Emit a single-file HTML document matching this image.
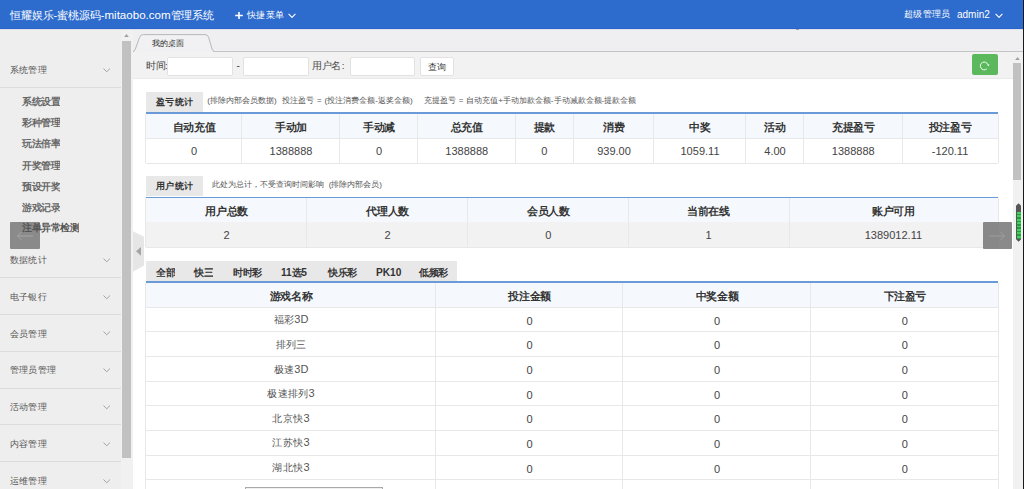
<!DOCTYPE html>
<html><head><meta charset="utf-8">
<style>
*{margin:0;padding:0;box-sizing:border-box}
html,body{width:1024px;height:489px;overflow:hidden;background:#fff;font-family:"Liberation Sans",sans-serif;position:relative}
.a{position:absolute;white-space:nowrap}
.n{font-size:1.07em}
</style></head><body>
<div class="a" style="left:0px;top:0px;width:1024px;height:29px;background:#2d6ccd;"></div>
<div class="a" style="left:0px;top:28px;width:1024px;height:1px;background:#2864c9;"></div>
<div class="a" style="left:10px;top:6.5px;font-size:11px;line-height:16.15px;color:#fff;transform:scale(0.9909);transform-origin:0 0;">恒耀娱乐-蜜桃源码-<span class="n" style="font-size:1.06em">mitaobo.com</span>管理系统</div>
<svg class="a" style="left:235px;top:12px" width="8" height="7" viewBox="0 0 8 7"><path d="M4 0 V7 M0.2 3.5 H7.8" stroke="#fff" stroke-width="1.6"/></svg>
<div class="a" style="left:246.5px;top:7.5px;font-size:10px;line-height:15.05px;color:#fff;transform:scale(0.9300);transform-origin:0 0;">快捷菜单</div>
<svg class="a" style="left:287.8px;top:12.8px" width="8" height="5.5" viewBox="0 0 8 5.5"><path d="M0.6 0.8 L4 4.4 L7.4 0.8" fill="none" stroke="#fff" stroke-width="1.1"/></svg>
<div class="a" style="left:903.5px;top:7.3px;font-size:10px;line-height:15.05px;color:#fff;transform:scale(0.9300);transform-origin:0 0;">超级管理员</div>
<div class="a" style="left:957px;top:7.5px;font-size:10px;line-height:14px;color:#fff;">admin2</div>
<svg class="a" style="left:994.8px;top:12.8px" width="8" height="5.5" viewBox="0 0 8 5.5"><path d="M0.6 0.8 L4 4.4 L7.4 0.8" fill="none" stroke="#fff" stroke-width="1.1"/></svg>
<div class="a" style="left:0px;top:29px;width:121px;height:460px;background:#eeeeee;"></div>
<div class="a" style="left:0px;top:87px;width:121px;height:1px;background:#dcdcdc;"></div>
<div class="a" style="left:10px;top:63.7px;font-size:10px;line-height:14.13px;color:#555;transform:scale(0.9200);transform-origin:0 0;">系统管理</div>
<svg class="a" style="left:103px;top:67.5px" width="8" height="5" viewBox="0 0 8 5"><path d="M0.5 0.5 L3.7 3.8 L7 0.5" fill="none" stroke="#9a9a9a" stroke-width="0.9"/></svg>
<div class="a" style="left:22px;top:94.60000000000001px;font-size:10px;line-height:13.68px;color:#666;font-weight:bold;transform:scale(0.9500);transform-origin:0 0;">系统设置</div>
<div class="a" style="left:22px;top:115.9px;font-size:10px;line-height:13.68px;color:#666;font-weight:bold;transform:scale(0.9500);transform-origin:0 0;">彩种管理</div>
<div class="a" style="left:22px;top:137.2px;font-size:10px;line-height:13.68px;color:#666;font-weight:bold;transform:scale(0.9500);transform-origin:0 0;">玩法倍率</div>
<div class="a" style="left:22px;top:158.5px;font-size:10px;line-height:13.68px;color:#666;font-weight:bold;transform:scale(0.9500);transform-origin:0 0;">开奖管理</div>
<div class="a" style="left:22px;top:179.79999999999998px;font-size:10px;line-height:13.68px;color:#666;font-weight:bold;transform:scale(0.9500);transform-origin:0 0;">预设开奖</div>
<div class="a" style="left:22px;top:201.1px;font-size:10px;line-height:13.68px;color:#666;font-weight:bold;transform:scale(0.9500);transform-origin:0 0;">游戏记录</div>
<div class="a" style="left:10px;top:222px;width:30px;height:27.3px;background:#8a8a8a;border-radius:1px"></div>
<svg class="a" style="left:16px;top:230.5px" width="18" height="10" viewBox="0 0 18 10"><path d="M17 5 H1.5 M5.5 1 L1.5 5 L5.5 9" fill="none" stroke="#a6a6a6" stroke-width="1"/></svg>
<div class="a" style="left:22px;top:221.39999999999998px;font-size:10px;line-height:13.68px;color:#555;font-weight:bold;transform:scale(0.9500);transform-origin:0 0;">注单异常检测</div>
<div class="a" style="left:0px;top:277.2px;width:121px;height:1px;background:#dcdcdc;"></div>
<div class="a" style="left:10px;top:253.89999999999998px;font-size:10px;line-height:14.13px;color:#555;transform:scale(0.9200);transform-origin:0 0;">数据统计</div>
<svg class="a" style="left:103px;top:257.7px" width="8" height="5" viewBox="0 0 8 5"><path d="M0.5 0.5 L3.7 3.8 L7 0.5" fill="none" stroke="#9a9a9a" stroke-width="0.9"/></svg>
<div class="a" style="left:0px;top:314px;width:121px;height:1px;background:#dcdcdc;"></div>
<div class="a" style="left:10px;top:290.7px;font-size:10px;line-height:14.13px;color:#555;transform:scale(0.9200);transform-origin:0 0;">电子银行</div>
<svg class="a" style="left:103px;top:294.5px" width="8" height="5" viewBox="0 0 8 5"><path d="M0.5 0.5 L3.7 3.8 L7 0.5" fill="none" stroke="#9a9a9a" stroke-width="0.9"/></svg>
<div class="a" style="left:0px;top:350.8px;width:121px;height:1px;background:#dcdcdc;"></div>
<div class="a" style="left:10px;top:327.5px;font-size:10px;line-height:14.13px;color:#555;transform:scale(0.9200);transform-origin:0 0;">会员管理</div>
<svg class="a" style="left:103px;top:331.3px" width="8" height="5" viewBox="0 0 8 5"><path d="M0.5 0.5 L3.7 3.8 L7 0.5" fill="none" stroke="#9a9a9a" stroke-width="0.9"/></svg>
<div class="a" style="left:0px;top:387.6px;width:121px;height:1px;background:#dcdcdc;"></div>
<div class="a" style="left:10px;top:364.3px;font-size:10px;line-height:14.13px;color:#555;transform:scale(0.9200);transform-origin:0 0;">管理员管理</div>
<svg class="a" style="left:103px;top:368.1px" width="8" height="5" viewBox="0 0 8 5"><path d="M0.5 0.5 L3.7 3.8 L7 0.5" fill="none" stroke="#9a9a9a" stroke-width="0.9"/></svg>
<div class="a" style="left:0px;top:424.4px;width:121px;height:1px;background:#dcdcdc;"></div>
<div class="a" style="left:10px;top:401.09999999999997px;font-size:10px;line-height:14.13px;color:#555;transform:scale(0.9200);transform-origin:0 0;">活动管理</div>
<svg class="a" style="left:103px;top:404.9px" width="8" height="5" viewBox="0 0 8 5"><path d="M0.5 0.5 L3.7 3.8 L7 0.5" fill="none" stroke="#9a9a9a" stroke-width="0.9"/></svg>
<div class="a" style="left:0px;top:461.2px;width:121px;height:1px;background:#dcdcdc;"></div>
<div class="a" style="left:10px;top:437.9px;font-size:10px;line-height:14.13px;color:#555;transform:scale(0.9200);transform-origin:0 0;">内容管理</div>
<svg class="a" style="left:103px;top:441.7px" width="8" height="5" viewBox="0 0 8 5"><path d="M0.5 0.5 L3.7 3.8 L7 0.5" fill="none" stroke="#9a9a9a" stroke-width="0.9"/></svg>
<div class="a" style="left:10px;top:474.7px;font-size:10px;line-height:14.13px;color:#555;transform:scale(0.9200);transform-origin:0 0;">运维管理</div>
<svg class="a" style="left:103px;top:478.5px" width="8" height="5" viewBox="0 0 8 5"><path d="M0.5 0.5 L3.7 3.8 L7 0.5" fill="none" stroke="#9a9a9a" stroke-width="0.9"/></svg>
<div class="a" style="left:121px;top:29px;width:12px;height:460px;background:#f1f1f1;"></div>
<svg class="a" style="left:124px;top:33.8px" width="5" height="3.2" viewBox="0 0 5 3.2"><path d="M0 3.2 L2.5 0 L5 3.2Z" fill="#a0a0a0"/></svg>
<div class="a" style="left:122px;top:40.7px;width:9px;height:417.3px;background:#c1c1c1;"></div>
<div class="a" style="left:133px;top:29px;width:890px;height:23px;background:#efeef0;"></div>
<div class="a" style="left:133px;top:51px;width:1px;height:1px;background:#c4c4c4;"></div>
<div class="a" style="left:213px;top:51px;width:810px;height:1px;background:#c4c4c4;"></div>
<svg class="a" style="left:133px;top:34px" width="82" height="18" viewBox="0 0 82 18"><path d="M0 17.5 Q1.6 17.2 2.4 15 L6.6 3.2 Q7.6 0.6 10.2 0.6 L72 0.6 Q74.6 0.6 75.6 3.2 L79 15 Q79.8 17.3 81.5 17.5" fill="#f1f1f3" stroke="#b8b8b8" stroke-width="1"/></svg>
<div class="a" style="left:152px;top:37.5px;font-size:8px;line-height:11px;color:#222;">我的桌面</div>
<div class="a" style="left:133px;top:52px;width:880px;height:26px;background:#f2f2f2;"></div>
<div class="a" style="left:133px;top:77.5px;width:880px;height:1px;background:#e9e9e9;"></div>
<div class="a" style="left:145.5px;top:58.5px;font-size:10px;line-height:13.68px;color:#444;transform:scale(0.9500);transform-origin:0 0;">时间<span style="font-size:1.05em">:</span></div>
<div class="a" style="left:166.5px;top:56.6px;width:66.0px;height:19.7px;background:#fff;border:1px solid #e2e2e2;border-radius:2px"></div>
<div class="a" style="left:236.5px;top:58.5px;font-size:10px;line-height:13px;color:#444;">-</div>
<div class="a" style="left:242.5px;top:56.6px;width:66.30000000000001px;height:19.7px;background:#fff;border:1px solid #e2e2e2;border-radius:2px"></div>
<div class="a" style="left:312px;top:58.5px;font-size:10px;line-height:13.68px;color:#444;transform:scale(0.9500);transform-origin:0 0;">用户名<span style="font-size:1.05em;margin-left:1.2px">:</span></div>
<div class="a" style="left:349.7px;top:56.6px;width:65.60000000000002px;height:19.7px;background:#fff;border:1px solid #e2e2e2;border-radius:2px"></div>
<div class="a" style="left:420px;top:56.6px;width:34.19999999999999px;height:19.7px;background:#fff;border:1px solid #e2e2e2;border-radius:2px"></div>
<div class="a" style="left:427.5px;top:60.5px;font-size:10px;line-height:13.98px;color:#333;transform:scale(0.9300);transform-origin:0 0;">查询</div>
<div class="a" style="left:972px;top:54.3px;width:26px;height:20.5px;background:#5cb85c;border-radius:2px"></div>
<svg class="a" style="left:978px;top:60px" width="12" height="12" viewBox="0 0 12 12"><path d="M9.9 4.6 A3.9 3.9 0 1 0 8.8 8.9" fill="none" stroke="#fff" stroke-width="0.9"/><path d="M9.0 4.6 L11.6 4.6 L10.3 6.3Z" fill="#fff"/></svg>
<div class="a" style="left:145.9px;top:92.4px;width:57px;height:19.8px;background:#e8e8e8;"></div>
<div class="a" style="left:155.7px;top:96.3px;font-size:10px;line-height:13.83px;color:#333;font-weight:bold;transform:scale(0.9400);transform-origin:0 0;">盈亏统计</div>
<div class="a" style="left:207.3px;top:94.5px;font-size:8px;line-height:12px;color:#555;word-spacing:0.6px">(排除内部会员数据)&nbsp; 投注盈亏 = (投注消费金额-返奖金额)&nbsp;&nbsp;&nbsp; 充提盈亏 = 自动充值+手动加款金额-手动减款金额-提款金额</div>
<div class="a" style="left:145.5px;top:112.2px;width:852.5px;height:1.6px;background:#6a9ad8;"></div>
<div class="a" style="left:145.5px;top:113.8px;width:852.5px;height:24.2px;background:#f5f9fd;"></div>
<div class="a" style="left:145.5px;width:96.0px;text-align:center;top:119.99999999999999px;font-size:11px;line-height:14.53px;color:#333;font-weight:bold;transform:scale(0.9636);transform-origin:50% 0;">自动充值</div>
<div class="a" style="left:241.5px;width:98.0px;text-align:center;top:119.99999999999999px;font-size:11px;line-height:14.53px;color:#333;font-weight:bold;transform:scale(0.9636);transform-origin:50% 0;">手动加</div>
<div class="a" style="left:339.5px;width:78.0px;text-align:center;top:119.99999999999999px;font-size:11px;line-height:14.53px;color:#333;font-weight:bold;transform:scale(0.9636);transform-origin:50% 0;">手动减</div>
<div class="a" style="left:417.5px;width:97.5px;text-align:center;top:119.99999999999999px;font-size:11px;line-height:14.53px;color:#333;font-weight:bold;transform:scale(0.9636);transform-origin:50% 0;">总充值</div>
<div class="a" style="left:515px;width:58.5px;text-align:center;top:119.99999999999999px;font-size:11px;line-height:14.53px;color:#333;font-weight:bold;transform:scale(0.9636);transform-origin:50% 0;">提款</div>
<div class="a" style="left:573.5px;width:80.0px;text-align:center;top:119.99999999999999px;font-size:11px;line-height:14.53px;color:#333;font-weight:bold;transform:scale(0.9636);transform-origin:50% 0;">消费</div>
<div class="a" style="left:653.5px;width:92.0px;text-align:center;top:119.99999999999999px;font-size:11px;line-height:14.53px;color:#333;font-weight:bold;transform:scale(0.9636);transform-origin:50% 0;">中奖</div>
<div class="a" style="left:745.5px;width:58.0px;text-align:center;top:119.99999999999999px;font-size:11px;line-height:14.53px;color:#333;font-weight:bold;transform:scale(0.9636);transform-origin:50% 0;">活动</div>
<div class="a" style="left:803.5px;width:98.5px;text-align:center;top:119.99999999999999px;font-size:11px;line-height:14.53px;color:#333;font-weight:bold;transform:scale(0.9636);transform-origin:50% 0;">充提盈亏</div>
<div class="a" style="left:902px;width:96px;text-align:center;top:119.99999999999999px;font-size:11px;line-height:14.53px;color:#333;font-weight:bold;transform:scale(0.9636);transform-origin:50% 0;">投注盈亏</div>
<div class="a" style="left:145.5px;top:137.5px;width:852.5px;height:1px;background:#e8e8e8;"></div>
<div class="a" style="left:145.5px;width:96.0px;text-align:center;top:144.8px;font-size:11px;line-height:14.95px;color:#444;transform:scale(0.9364);transform-origin:50% 0;"><span class="n">0</span></div>
<div class="a" style="left:241.5px;width:98.0px;text-align:center;top:144.8px;font-size:11px;line-height:14.95px;color:#444;transform:scale(0.9364);transform-origin:50% 0;"><span class="n">1388888</span></div>
<div class="a" style="left:339.5px;width:78.0px;text-align:center;top:144.8px;font-size:11px;line-height:14.95px;color:#444;transform:scale(0.9364);transform-origin:50% 0;"><span class="n">0</span></div>
<div class="a" style="left:417.5px;width:97.5px;text-align:center;top:144.8px;font-size:11px;line-height:14.95px;color:#444;transform:scale(0.9364);transform-origin:50% 0;"><span class="n">1388888</span></div>
<div class="a" style="left:515px;width:58.5px;text-align:center;top:144.8px;font-size:11px;line-height:14.95px;color:#444;transform:scale(0.9364);transform-origin:50% 0;"><span class="n">0</span></div>
<div class="a" style="left:573.5px;width:80.0px;text-align:center;top:144.8px;font-size:11px;line-height:14.95px;color:#444;transform:scale(0.9364);transform-origin:50% 0;"><span class="n">939.00</span></div>
<div class="a" style="left:653.5px;width:92.0px;text-align:center;top:144.8px;font-size:11px;line-height:14.95px;color:#444;transform:scale(0.9364);transform-origin:50% 0;"><span class="n">1059.11</span></div>
<div class="a" style="left:745.5px;width:58.0px;text-align:center;top:144.8px;font-size:11px;line-height:14.95px;color:#444;transform:scale(0.9364);transform-origin:50% 0;"><span class="n">4.00</span></div>
<div class="a" style="left:803.5px;width:98.5px;text-align:center;top:144.8px;font-size:11px;line-height:14.95px;color:#444;transform:scale(0.9364);transform-origin:50% 0;"><span class="n">1388888</span></div>
<div class="a" style="left:902px;width:96px;text-align:center;top:144.8px;font-size:11px;line-height:14.95px;color:#444;transform:scale(0.9364);transform-origin:50% 0;"><span class="n">-120.11</span></div>
<div class="a" style="left:145.5px;top:162.5px;width:852.5px;height:1px;background:#e8e8e8;"></div>
<div class="a" style="left:145.0px;top:113.8px;width:1px;height:49.2px;background:#e8e8e8;"></div>
<div class="a" style="left:241.0px;top:113.8px;width:1px;height:49.2px;background:#e8e8e8;"></div>
<div class="a" style="left:339.0px;top:113.8px;width:1px;height:49.2px;background:#e8e8e8;"></div>
<div class="a" style="left:417.0px;top:113.8px;width:1px;height:49.2px;background:#e8e8e8;"></div>
<div class="a" style="left:514.5px;top:113.8px;width:1px;height:49.2px;background:#e8e8e8;"></div>
<div class="a" style="left:573.0px;top:113.8px;width:1px;height:49.2px;background:#e8e8e8;"></div>
<div class="a" style="left:653.0px;top:113.8px;width:1px;height:49.2px;background:#e8e8e8;"></div>
<div class="a" style="left:745.0px;top:113.8px;width:1px;height:49.2px;background:#e8e8e8;"></div>
<div class="a" style="left:803.0px;top:113.8px;width:1px;height:49.2px;background:#e8e8e8;"></div>
<div class="a" style="left:901.5px;top:113.8px;width:1px;height:49.2px;background:#e8e8e8;"></div>
<div class="a" style="left:997.5px;top:113.8px;width:1px;height:49.2px;background:#e8e8e8;"></div>
<div class="a" style="left:146px;top:176.4px;width:57.2px;height:19.6px;background:#e8e8e8;"></div>
<div class="a" style="left:155.7px;top:179.8px;font-size:10px;line-height:13.83px;color:#333;font-weight:bold;transform:scale(0.9400);transform-origin:0 0;">用户统计</div>
<div class="a" style="left:212.2px;top:178.7px;font-size:8px;line-height:12px;color:#555;">此处为总计，不受查询时间影响&nbsp; (排除内部会员)</div>
<div class="a" style="left:145.5px;top:196.8px;width:852.5px;height:1.6px;background:#6a9ad8;"></div>
<div class="a" style="left:145.5px;top:198.4px;width:852.5px;height:23.6px;background:#f5f9fd;"></div>
<div class="a" style="left:145.5px;width:161.0px;text-align:center;top:204.3px;font-size:11px;line-height:14.53px;color:#333;font-weight:bold;transform:scale(0.9636);transform-origin:50% 0;">用户总数</div>
<div class="a" style="left:306.5px;width:161.0px;text-align:center;top:204.3px;font-size:11px;line-height:14.53px;color:#333;font-weight:bold;transform:scale(0.9636);transform-origin:50% 0;">代理人数</div>
<div class="a" style="left:467.5px;width:160.79999999999995px;text-align:center;top:204.3px;font-size:11px;line-height:14.53px;color:#333;font-weight:bold;transform:scale(0.9636);transform-origin:50% 0;">会员人数</div>
<div class="a" style="left:628.3px;width:160.9000000000001px;text-align:center;top:204.3px;font-size:11px;line-height:14.53px;color:#333;font-weight:bold;transform:scale(0.9636);transform-origin:50% 0;">当前在线</div>
<div class="a" style="left:789.2px;width:208.79999999999995px;text-align:center;top:204.3px;font-size:11px;line-height:14.53px;color:#333;font-weight:bold;transform:scale(0.9636);transform-origin:50% 0;">账户可用</div>
<div class="a" style="left:145.5px;top:221.5px;width:852.5px;height:1px;background:#e8e8e8;"></div>
<div class="a" style="left:145.5px;top:222.0px;width:852.5px;height:25px;background:#f2f2f2;"></div>
<div class="a" style="left:145.5px;width:161.0px;text-align:center;top:228.8px;font-size:11px;line-height:14.95px;color:#444;transform:scale(0.9364);transform-origin:50% 0;"><span class="n">2</span></div>
<div class="a" style="left:306.5px;width:161.0px;text-align:center;top:228.8px;font-size:11px;line-height:14.95px;color:#444;transform:scale(0.9364);transform-origin:50% 0;"><span class="n">2</span></div>
<div class="a" style="left:467.5px;width:160.79999999999995px;text-align:center;top:228.8px;font-size:11px;line-height:14.95px;color:#444;transform:scale(0.9364);transform-origin:50% 0;"><span class="n">0</span></div>
<div class="a" style="left:628.3px;width:160.9000000000001px;text-align:center;top:228.8px;font-size:11px;line-height:14.95px;color:#444;transform:scale(0.9364);transform-origin:50% 0;"><span class="n">1</span></div>
<div class="a" style="left:789.2px;width:208.79999999999995px;text-align:center;top:228.8px;font-size:11px;line-height:14.95px;color:#444;transform:scale(0.9364);transform-origin:50% 0;"><span class="n">1389012.11</span></div>
<div class="a" style="left:145.5px;top:246.5px;width:852.5px;height:1px;background:#e8e8e8;"></div>
<div class="a" style="left:145.0px;top:198.4px;width:1px;height:48.599999999999994px;background:#e8e8e8;"></div>
<div class="a" style="left:306.0px;top:198.4px;width:1px;height:48.599999999999994px;background:#e8e8e8;"></div>
<div class="a" style="left:467.0px;top:198.4px;width:1px;height:48.599999999999994px;background:#e8e8e8;"></div>
<div class="a" style="left:627.8px;top:198.4px;width:1px;height:48.599999999999994px;background:#e8e8e8;"></div>
<div class="a" style="left:788.7px;top:198.4px;width:1px;height:48.599999999999994px;background:#e8e8e8;"></div>
<div class="a" style="left:997.5px;top:198.4px;width:1px;height:48.599999999999994px;background:#e8e8e8;"></div>
<div class="a" style="left:146px;top:261.4px;width:311px;height:19.8px;background:#e8e8e8;"></div>
<div class="a" style="left:155.8px;top:265.8px;font-size:10px;line-height:13.68px;color:#333;font-weight:bold;transform:scale(0.9500);transform-origin:0 0;">全部</div>
<div class="a" style="left:194.1px;top:265.8px;font-size:10px;line-height:13.68px;color:#333;font-weight:bold;transform:scale(0.9500);transform-origin:0 0;">快三</div>
<div class="a" style="left:233px;top:265.8px;font-size:10px;line-height:13.68px;color:#333;font-weight:bold;transform:scale(0.9500);transform-origin:0 0;">时时彩</div>
<div class="a" style="left:281px;top:265.8px;font-size:10px;line-height:13.68px;color:#333;font-weight:bold;transform:scale(0.9500);transform-origin:0 0;"><span class="n">11</span>选<span class="n">5</span></div>
<div class="a" style="left:327.6px;top:265.8px;font-size:10px;line-height:13.68px;color:#333;font-weight:bold;transform:scale(0.9500);transform-origin:0 0;">快乐彩</div>
<div class="a" style="left:375.7px;top:265.8px;font-size:10px;line-height:13.68px;color:#333;font-weight:bold;transform:scale(0.9500);transform-origin:0 0;"><span class="n">PK10</span></div>
<div class="a" style="left:418.9px;top:265.8px;font-size:10px;line-height:13.68px;color:#333;font-weight:bold;transform:scale(0.9500);transform-origin:0 0;">低频彩</div>
<div class="a" style="left:145.5px;top:281.2px;width:852.5px;height:1.6px;background:#6a9ad8;"></div>
<div class="a" style="left:145.5px;top:282.8px;width:852.5px;height:24.5px;background:#f5f9fd;"></div>
<div class="a" style="left:145.5px;width:290.0px;text-align:center;top:289.15000000000003px;font-size:11px;line-height:14.53px;color:#333;font-weight:bold;transform:scale(0.9636);transform-origin:50% 0;">游戏名称</div>
<div class="a" style="left:435.5px;width:187.0px;text-align:center;top:289.15000000000003px;font-size:11px;line-height:14.53px;color:#333;font-weight:bold;transform:scale(0.9636);transform-origin:50% 0;">投注金额</div>
<div class="a" style="left:622.5px;width:188.0px;text-align:center;top:289.15000000000003px;font-size:11px;line-height:14.53px;color:#333;font-weight:bold;transform:scale(0.9636);transform-origin:50% 0;">中奖金额</div>
<div class="a" style="left:810.5px;width:187.5px;text-align:center;top:289.15000000000003px;font-size:11px;line-height:14.53px;color:#333;font-weight:bold;transform:scale(0.9636);transform-origin:50% 0;">下注盈亏</div>
<div class="a" style="left:145.5px;top:306.8px;width:852.5px;height:1px;background:#e8e8e8;"></div>
<div class="a" style="left:145.5px;width:290.0px;text-align:center;top:313.225px;font-size:11px;line-height:14.95px;color:#555;transform:scale(0.9364);transform-origin:50% 0;">福彩<span class="n">3D</span></div>
<div class="a" style="left:435.5px;width:187.0px;text-align:center;top:314.725px;font-size:11px;line-height:14.95px;color:#444;transform:scale(0.9364);transform-origin:50% 0;"><span class="n">0</span></div>
<div class="a" style="left:622.5px;width:188.0px;text-align:center;top:314.725px;font-size:11px;line-height:14.95px;color:#444;transform:scale(0.9364);transform-origin:50% 0;"><span class="n">0</span></div>
<div class="a" style="left:810.5px;width:187.5px;text-align:center;top:314.725px;font-size:11px;line-height:14.95px;color:#444;transform:scale(0.9364);transform-origin:50% 0;"><span class="n">0</span></div>
<div class="a" style="left:145.5px;top:331.45px;width:852.5px;height:1px;background:#e8e8e8;"></div>
<div class="a" style="left:145.5px;width:290.0px;text-align:center;top:337.875px;font-size:11px;line-height:14.95px;color:#555;transform:scale(0.9364);transform-origin:50% 0;">排列三</div>
<div class="a" style="left:435.5px;width:187.0px;text-align:center;top:339.375px;font-size:11px;line-height:14.95px;color:#444;transform:scale(0.9364);transform-origin:50% 0;"><span class="n">0</span></div>
<div class="a" style="left:622.5px;width:188.0px;text-align:center;top:339.375px;font-size:11px;line-height:14.95px;color:#444;transform:scale(0.9364);transform-origin:50% 0;"><span class="n">0</span></div>
<div class="a" style="left:810.5px;width:187.5px;text-align:center;top:339.375px;font-size:11px;line-height:14.95px;color:#444;transform:scale(0.9364);transform-origin:50% 0;"><span class="n">0</span></div>
<div class="a" style="left:145.5px;top:356.09999999999997px;width:852.5px;height:1px;background:#e8e8e8;"></div>
<div class="a" style="left:145.5px;width:290.0px;text-align:center;top:362.525px;font-size:11px;line-height:14.95px;color:#555;transform:scale(0.9364);transform-origin:50% 0;">极速<span class="n">3D</span></div>
<div class="a" style="left:435.5px;width:187.0px;text-align:center;top:364.025px;font-size:11px;line-height:14.95px;color:#444;transform:scale(0.9364);transform-origin:50% 0;"><span class="n">0</span></div>
<div class="a" style="left:622.5px;width:188.0px;text-align:center;top:364.025px;font-size:11px;line-height:14.95px;color:#444;transform:scale(0.9364);transform-origin:50% 0;"><span class="n">0</span></div>
<div class="a" style="left:810.5px;width:187.5px;text-align:center;top:364.025px;font-size:11px;line-height:14.95px;color:#444;transform:scale(0.9364);transform-origin:50% 0;"><span class="n">0</span></div>
<div class="a" style="left:145.5px;top:380.74999999999994px;width:852.5px;height:1px;background:#e8e8e8;"></div>
<div class="a" style="left:145.5px;width:290.0px;text-align:center;top:387.17499999999995px;font-size:11px;line-height:14.95px;color:#555;transform:scale(0.9364);transform-origin:50% 0;">极速排列<span class="n">3</span></div>
<div class="a" style="left:435.5px;width:187.0px;text-align:center;top:388.67499999999995px;font-size:11px;line-height:14.95px;color:#444;transform:scale(0.9364);transform-origin:50% 0;"><span class="n">0</span></div>
<div class="a" style="left:622.5px;width:188.0px;text-align:center;top:388.67499999999995px;font-size:11px;line-height:14.95px;color:#444;transform:scale(0.9364);transform-origin:50% 0;"><span class="n">0</span></div>
<div class="a" style="left:810.5px;width:187.5px;text-align:center;top:388.67499999999995px;font-size:11px;line-height:14.95px;color:#444;transform:scale(0.9364);transform-origin:50% 0;"><span class="n">0</span></div>
<div class="a" style="left:145.5px;top:405.3999999999999px;width:852.5px;height:1px;background:#e8e8e8;"></div>
<div class="a" style="left:145.5px;width:290.0px;text-align:center;top:411.82499999999993px;font-size:11px;line-height:14.95px;color:#555;transform:scale(0.9364);transform-origin:50% 0;">北京快<span class="n">3</span></div>
<div class="a" style="left:435.5px;width:187.0px;text-align:center;top:413.32499999999993px;font-size:11px;line-height:14.95px;color:#444;transform:scale(0.9364);transform-origin:50% 0;"><span class="n">0</span></div>
<div class="a" style="left:622.5px;width:188.0px;text-align:center;top:413.32499999999993px;font-size:11px;line-height:14.95px;color:#444;transform:scale(0.9364);transform-origin:50% 0;"><span class="n">0</span></div>
<div class="a" style="left:810.5px;width:187.5px;text-align:center;top:413.32499999999993px;font-size:11px;line-height:14.95px;color:#444;transform:scale(0.9364);transform-origin:50% 0;"><span class="n">0</span></div>
<div class="a" style="left:145.5px;top:430.0499999999999px;width:852.5px;height:1px;background:#e8e8e8;"></div>
<div class="a" style="left:145.5px;width:290.0px;text-align:center;top:436.4749999999999px;font-size:11px;line-height:14.95px;color:#555;transform:scale(0.9364);transform-origin:50% 0;">江苏快<span class="n">3</span></div>
<div class="a" style="left:435.5px;width:187.0px;text-align:center;top:437.9749999999999px;font-size:11px;line-height:14.95px;color:#444;transform:scale(0.9364);transform-origin:50% 0;"><span class="n">0</span></div>
<div class="a" style="left:622.5px;width:188.0px;text-align:center;top:437.9749999999999px;font-size:11px;line-height:14.95px;color:#444;transform:scale(0.9364);transform-origin:50% 0;"><span class="n">0</span></div>
<div class="a" style="left:810.5px;width:187.5px;text-align:center;top:437.9749999999999px;font-size:11px;line-height:14.95px;color:#444;transform:scale(0.9364);transform-origin:50% 0;"><span class="n">0</span></div>
<div class="a" style="left:145.5px;top:454.6999999999999px;width:852.5px;height:1px;background:#e8e8e8;"></div>
<div class="a" style="left:145.5px;width:290.0px;text-align:center;top:461.1249999999999px;font-size:11px;line-height:14.95px;color:#555;transform:scale(0.9364);transform-origin:50% 0;">湖北快<span class="n">3</span></div>
<div class="a" style="left:435.5px;width:187.0px;text-align:center;top:462.6249999999999px;font-size:11px;line-height:14.95px;color:#444;transform:scale(0.9364);transform-origin:50% 0;"><span class="n">0</span></div>
<div class="a" style="left:622.5px;width:188.0px;text-align:center;top:462.6249999999999px;font-size:11px;line-height:14.95px;color:#444;transform:scale(0.9364);transform-origin:50% 0;"><span class="n">0</span></div>
<div class="a" style="left:810.5px;width:187.5px;text-align:center;top:462.6249999999999px;font-size:11px;line-height:14.95px;color:#444;transform:scale(0.9364);transform-origin:50% 0;"><span class="n">0</span></div>
<div class="a" style="left:145.5px;top:479.34999999999985px;width:852.5px;height:1px;background:#e8e8e8;"></div>
<div class="a" style="left:145.5px;width:290.0px;text-align:center;top:485.77499999999986px;font-size:11px;line-height:14.95px;color:#555;transform:scale(0.9364);transform-origin:50% 0;">&nbsp;</div>
<div class="a" style="left:435.5px;width:187.0px;text-align:center;top:487.27499999999986px;font-size:11px;line-height:14.95px;color:#444;transform:scale(0.9364);transform-origin:50% 0;"><span class="n">0</span></div>
<div class="a" style="left:622.5px;width:188.0px;text-align:center;top:487.27499999999986px;font-size:11px;line-height:14.95px;color:#444;transform:scale(0.9364);transform-origin:50% 0;"><span class="n">0</span></div>
<div class="a" style="left:810.5px;width:187.5px;text-align:center;top:487.27499999999986px;font-size:11px;line-height:14.95px;color:#444;transform:scale(0.9364);transform-origin:50% 0;"><span class="n">0</span></div>
<div class="a" style="left:145.5px;top:503.99999999999983px;width:852.5px;height:1px;background:#e8e8e8;"></div>
<div class="a" style="left:145.0px;top:282.8px;width:1px;height:221.69999999999982px;background:#e8e8e8;"></div>
<div class="a" style="left:435.0px;top:282.8px;width:1px;height:221.69999999999982px;background:#e8e8e8;"></div>
<div class="a" style="left:622.0px;top:282.8px;width:1px;height:221.69999999999982px;background:#e8e8e8;"></div>
<div class="a" style="left:810.0px;top:282.8px;width:1px;height:221.69999999999982px;background:#e8e8e8;"></div>
<div class="a" style="left:997.5px;top:282.8px;width:1px;height:221.69999999999982px;background:#e8e8e8;"></div>
<div class="a" style="left:245px;top:487px;width:138px;height:3px;background:#f0f0f0;border:1px solid #a9a9a9;border-bottom:none"></div>
<div class="a" style="left:132.5px;top:231px;width:11.5px;height:41px;background:#e6e6e6;clip-path:polygon(0 0,100% 14%,100% 84%,0 100%)"></div>
<svg class="a" style="left:136px;top:247px" width="5" height="8.7" viewBox="0 0 5 8.7"><path d="M5 0 L0 4.35 L5 8.7Z" fill="#a4a4a4"/></svg>
<div class="a" style="left:0px;top:29px;width:1023px;height:1px;background:#dfe2ea;"></div>
<div class="a" style="left:796px;top:29px;width:3px;height:1px;background:#9a9ca6;"></div>
<div class="a" style="left:1013px;top:52px;width:10px;height:437px;background:#f1f1f1;"></div>
<svg class="a" style="left:1014.8px;top:56.8px" width="5" height="3.2" viewBox="0 0 5 3.2"><path d="M0 3.2 L2.5 0 L5 3.2Z" fill="#a0a0a0"/></svg>
<div class="a" style="left:1013px;top:63.3px;width:8px;height:116.4px;background:#c1c1c1;"></div>
<div class="a" style="left:982.8px;top:222.2px;width:29.1px;height:26.5px;background:rgba(118,118,118,0.85);border-radius:1px"></div>
<svg class="a" style="left:988px;top:230.5px" width="18" height="10" viewBox="0 0 18 10"><path d="M1 5 H16.5 M12.5 1 L16.5 5 L12.5 9" fill="none" stroke="#9c9c9c" stroke-width="1"/></svg>
<div class="a" style="left:1015.8px;top:203.2px;width:5.6px;height:38.6px;background:#575757;clip-path:polygon(50% 0,100% 7%,100% 93%,50% 100%,0 93%,0 7%)"></div>
<div class="a" style="left:1016.6px;top:212.4px;width:4px;height:27px;background:repeating-linear-gradient(#3fd35c 0 1.7px,#2a9a40 1.7px 3.4px);"></div>
<div class="a" style="left:1023px;top:0px;width:1px;height:489px;background:#1a1a1a;"></div>
</body></html>
